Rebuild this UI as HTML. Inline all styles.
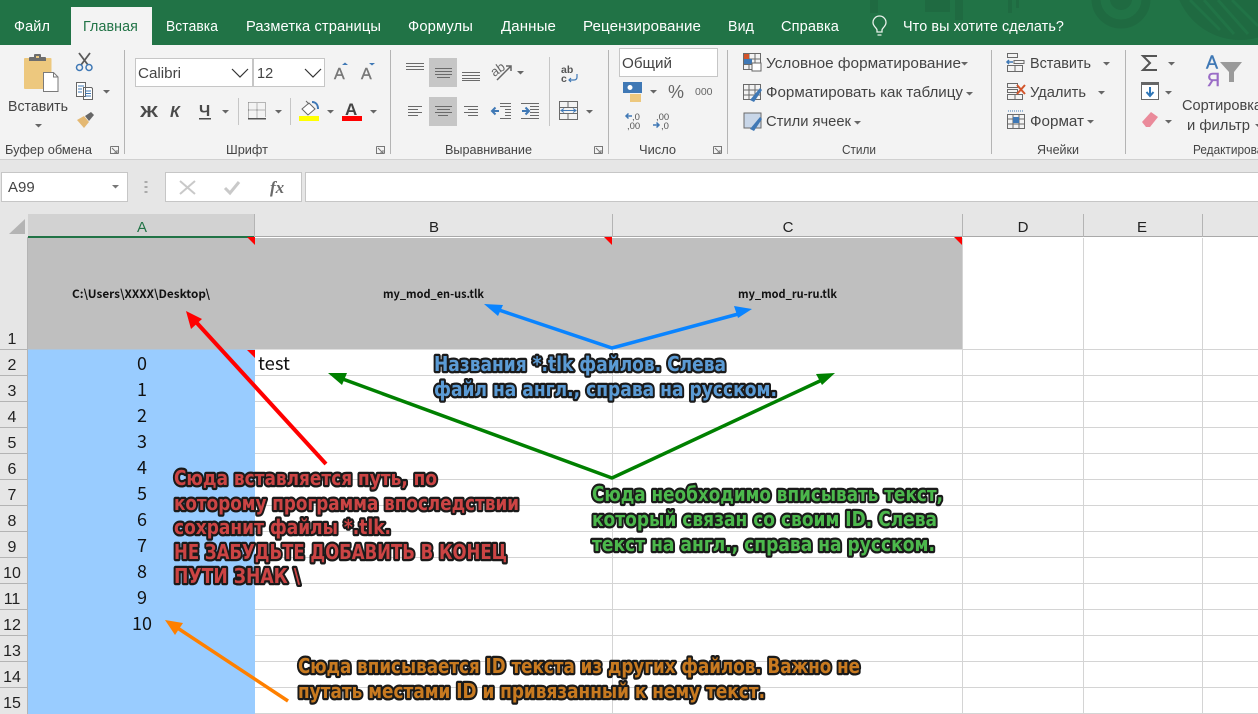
<!DOCTYPE html>
<html><head><meta charset="utf-8"><style>
html,body{margin:0;padding:0;width:1258px;height:714px;overflow:hidden;background:#fff}
svg{display:block;font-family:"Liberation Sans",sans-serif}
.t{fill:#fff;font-size:14.5px;letter-spacing:.1px}
.r{fill:#444;font-size:15px}
.g{fill:#444;font-size:12.5px}
.h{fill:#222;font-size:15px;text-anchor:middle}
.n{fill:#222;font-size:16px;text-anchor:middle}
.v{fill:#111;font-size:18px;text-anchor:middle;font-family:"Noto Sans CJK SC","Liberation Sans",sans-serif}
.b{fill:#111;font-size:11.5px;font-weight:bold;font-family:"Noto Sans CJK SC","Liberation Sans",sans-serif}
.a{font-family:"DejaVu Sans",sans-serif;font-weight:bold;font-size:20px;stroke:#1a1a1a;stroke-width:4.6px;stroke-linejoin:round;paint-order:stroke fill}
.ln{stroke:#6a6a6a;stroke-width:1;fill:none}
.ic{stroke:#6a6a6a;stroke-width:1;fill:none}
</style></head><body>
<svg width="1258" height="714" viewBox="0 0 1258 714" xmlns="http://www.w3.org/2000/svg">
<rect width="1258" height="714" fill="#fff"/>
<rect width="1258" height="45" fill="#217346"/>
<g fill="#1f6a41">
<circle cx="1121" cy="-1" r="25" fill="none" stroke="#1f6a41" stroke-width="9"/>
<circle cx="1121" cy="-1" r="11"/>
<circle cx="1240" cy="-26" r="66"/>
<rect x="870" width="8" height="13"/><rect x="925" width="25" height="12"/><rect x="955" width="8" height="20"/><rect x="1008" width="4" height="13"/><rect x="1016" width="3" height="8"/>
</g>
<g stroke="#217346" stroke-width="3"><path d="M1190 0l30 30M1204 0l30 34M1218 0l30 34M1232 0l26 26"/></g>
<rect y="45" width="1258" height="114" fill="#f3f3f3"/>
<rect x="71" y="7" width="81" height="39" fill="#f3f3f3"/>
<text class="t" x="14" y="31" textLength="36" lengthAdjust="spacingAndGlyphs">Файл</text>
<text class="t" x="83" y="31" textLength="55" lengthAdjust="spacingAndGlyphs" style="fill:#217346">Главная</text>
<text class="t" x="166" y="31" textLength="52" lengthAdjust="spacingAndGlyphs">Вставка</text>
<text class="t" x="246" y="31" textLength="135" lengthAdjust="spacingAndGlyphs">Разметка страницы</text>
<text class="t" x="408" y="31" textLength="65" lengthAdjust="spacingAndGlyphs">Формулы</text>
<text class="t" x="501" y="31" textLength="55" lengthAdjust="spacingAndGlyphs">Данные</text>
<text class="t" x="583" y="31" textLength="118" lengthAdjust="spacingAndGlyphs">Рецензирование</text>
<text class="t" x="728" y="31" textLength="26" lengthAdjust="spacingAndGlyphs">Вид</text>
<text class="t" x="781" y="31" textLength="58" lengthAdjust="spacingAndGlyphs">Справка</text>
<text class="t" x="903" y="31" textLength="161" lengthAdjust="spacingAndGlyphs">Что вы хотите сделать?</text>
<g fill="none" stroke="#e8f0ea" stroke-width="1.3"><path d="M877 32v-2c0-2-4-3.500-4-7.500a6.500 6.500 0 0 1 13 0c0 4-4 5.500-4 7.500v2zM877.500 35h4"/></g>
<g fill="#b4b4b4"><rect x="124" y="50" width="1" height="104"/><rect x="390" y="50" width="1" height="104"/><rect x="608" y="50" width="1" height="104"/><rect x="727" y="50" width="1" height="104"/><rect x="991" y="50" width="1" height="104"/><rect x="1125" y="50" width="1" height="104"/></g>
<rect y="159" width="1258" height="1.5" fill="#d0d0d0"/>
<rect x="24" y="58" width="27.500" height="31" rx="1" fill="#edc87e"/>
<path d="M29 61v-3q0-1 1-1h4v-2q0-1 1-1h5q1 0 1 1v2h4q1 0 1 1v3z" fill="#6d6d6d"/><rect x="36" y="56" width="3" height="2" fill="#edc87e"/>
<path d="M43.500 72.500h10l4.500 4.500v14.500h-14.500z" fill="#fff" stroke="#7a7a7a"/><path d="M53.500 72.500v4.500h4.500" fill="none" stroke="#7a7a7a"/>
<text class="r" x="8" y="111" textLength="60" lengthAdjust="spacingAndGlyphs">Вставить</text>
<g fill="#666"><path d="M35 124h7l-3.500 3.500zM103 90h7l-3.500 3.500zM222 110h7l-3.500 3.500zM275 110h7l-3.500 3.500zM327 110h7l-3.500 3.500zM370 110h7l-3.500 3.500zM517 71h7l-3.500 3.500zM586 110h7l-3.500 3.500zM650 90h7l-3.500 3.500zM961 62h7l-3.500 3.500zM966 92h7l-3.500 3.500zM854 121h7l-3.500 3.500zM1103 62h7l-3.500 3.500zM1098 91h7l-3.500 3.500zM1087 120h7l-3.500 3.500zM1168 62h7l-3.500 3.500zM1165 91h7l-3.500 3.500zM1165 120h7l-3.500 3.500zM1255 124h3v3z"/></g>
<path d="M79 53l9 12M90 53l-9 12" stroke="#5a5a5a" stroke-width="1.800" fill="none"/>
<circle cx="79.500" cy="67.500" r="3" fill="none" stroke="#3f78b5" stroke-width="1.500"/><circle cx="89" cy="67.500" r="3" fill="none" stroke="#3f78b5" stroke-width="1.500"/>
<path d="M76.500 82.500h9v14h-9zM83.500 87.500h8l1 1v11h-9z" fill="#fff" stroke="#666"/><path d="M78 86h6M78 89h4M78 92h4M85 91h6M85 93.500h6M85 96h6" stroke="#3f78b5"/>
<path d="M77 120l7-4 5 6-5 6z" fill="#e4b872"/><path d="M85 116l6-4 3 3-5 6z" fill="#666"/>
<text class="g" x="5" y="154" textLength="87" lengthAdjust="spacingAndGlyphs">Буфер обмена</text>
<text class="g" x="226" y="154" textLength="42" lengthAdjust="spacingAndGlyphs">Шрифт</text>
<text class="g" x="445" y="154" textLength="87" lengthAdjust="spacingAndGlyphs">Выравнивание</text>
<text class="g" x="639" y="154" textLength="37" lengthAdjust="spacingAndGlyphs">Число</text>
<text class="g" x="842" y="154" textLength="34" lengthAdjust="spacingAndGlyphs">Стили</text>
<text class="g" x="1037" y="154" textLength="42" lengthAdjust="spacingAndGlyphs">Ячейки</text>
<text class="g" x="1193" y="154" textLength="90" lengthAdjust="spacingAndGlyphs">Редактирование</text>
<g fill="none" stroke="#777"><path d="M110.500 146.500v7h8M110.500 146.500h8v7M112 148l5 5M117 150v3h-3"/><path d="M376.500 146.500v7h8M376.500 146.500h8v7M378 148l5 5M383 150v3h-3"/><path d="M594.500 146.500v7h8M594.500 146.500h8v7M596 148l5 5M601 150v3h-3"/><path d="M713.500 146.500v7h8M713.500 146.500h8v7M715 148l5 5M720 150v3h-3"/></g>
<rect x="135.500" y="58.500" width="117" height="28" fill="#fff" stroke="#c6c6c6"/>
<rect x="253.500" y="58.500" width="71" height="28" fill="#fff" stroke="#c6c6c6"/>
<text x="138" y="78" font-size="14.500" fill="#444" textLength="43" lengthAdjust="spacingAndGlyphs">Calibri</text>
<text x="257" y="78" font-size="14.500" fill="#444">12</text>
<path d="M232 69l8 8 8-8M305 69l8 8 8-8M697 59l8 8 8-8" fill="none" stroke="#333" stroke-width="1.200"/>
<text x="334" y="79" font-size="16" fill="#777" stroke="#777" stroke-width=".4">A</text><path d="M342 65h6l-3-2.500z" fill="#3f78b5"/>
<text x="361" y="79" font-size="16" fill="#777" stroke="#777" stroke-width=".4">A</text><path d="M369 63h6l-3 2.500z" fill="#3f78b5"/>
<text x="140" y="117" font-size="16" font-weight="bold" fill="#4a4a4a" textLength="18" lengthAdjust="spacingAndGlyphs">Ж</text>
<text x="170" y="117" font-size="16" font-weight="bold" font-style="italic" fill="#4a4a4a">К</text>
<text x="199" y="116" font-size="16" font-weight="bold" fill="#4a4a4a">Ч</text><rect x="199" y="118" width="12" height="1.500" fill="#4a4a4a"/>
<rect x="238" y="98" width="1" height="27" fill="#c6c6c6"/><rect x="290" y="98" width="1" height="27" fill="#c6c6c6"/>
<path d="M248.500 102.500h17v15M248.500 102.500v15M257 102.500v15M248.500 110h17" fill="none" stroke="#777" stroke-dasharray="1 1"/><rect x="248" y="118" width="18" height="1.500" fill="#555"/>
<path d="M302 109l7-6 6 6-7 6z" fill="#fff" stroke="#666"/><path d="M306 101l3 3" stroke="#666"/><path d="M312 102c4 0 6 3 6 7" fill="none" stroke="#3f78b5" stroke-width="2"/>
<rect x="299" y="116" width="20" height="5" fill="#ff0"/>
<text x="345" y="115" font-size="17" font-weight="bold" fill="#444">A</text>
<rect x="342" y="116" width="20" height="5" fill="#f00"/>
<rect x="429" y="58" width="28" height="29" fill="#c6c6c6"/><rect x="429" y="97" width="28" height="29" fill="#c6c6c6"/>
<path class="ln" d="M406 63.500h18M406 66.500h18M406 69.500h18M435 68.500h17M435 71.500h17M435 74.500h17M437 77.500h13M462 72.500h18M462 75.500h18M462 78.500h18M462 80.500h18"/>
<path class="ln" d="M408 106.500h14M408 109.500h10M408 112.500h14M408 115.500h10M435 106.500h17M437 109.500h13M435 112.500h17M438 115.500h10M464 106.500h14M468 109.500h10M464 112.500h14M468 115.500h10"/>
<path d="M497 80l14-14m-5 0h5v5" fill="none" stroke="#666" stroke-width="1.500"/><text x="492" y="74" font-size="13" fill="#666" transform="rotate(-35 498 72)">ab</text>
<path class="ln" d="M500 103.500h11M500 106.500h11M505 109.500h6M505 112.500h6M505 115.500h6M500 118.500h11M527 103.500h12M521 103.500h6M530 106.500h9M530 109.500h9M530 112.500h9M530 115.500h9M521 118.500h18"/>
<path d="M499 111h-6m2.500-3.500l-3.500 3.500 3.500 3.500M522 111h6m-2.500-3.500l3.500 3.500-3.500 3.500" fill="none" stroke="#3f78b5" stroke-width="2"/>
<rect x="549" y="57" width="1" height="69" fill="#c6c6c6"/>
<text x="561" y="73" font-size="10.500" font-weight="bold" fill="#555">ab</text><text x="561" y="82" font-size="10.500" font-weight="bold" fill="#555">c</text>
<path d="M577 74v3c0 2-1 3-3 3h-5m2-2l-2 2 2 2" fill="none" stroke="#3f78b5" stroke-width="1.200"/>
<path class="ic" d="M559.500 101.500h18v18h-18zM559.500 107.500h18M559.500 113.500h18M568 101.500v6M568 113.500v6"/>
<path d="M561 110.500h15m-12-2l-3 2 3 2m9-4l3 2-3 2" fill="none" stroke="#3f78b5"/>
<rect x="619.500" y="48.500" width="98" height="28" fill="#fff" stroke="#c6c6c6"/>
<text x="622" y="68" font-size="14.500" fill="#444" textLength="50" lengthAdjust="spacingAndGlyphs">Общий</text>
<rect x="623" y="82" width="19" height="11" fill="#3f78b5"/><circle cx="630" cy="87.500" r="2.500" fill="#fff"/>
<path d="M630 94h11v8h-11z" fill="#edc87e"/>
<text x="668" y="98" font-size="18" fill="#666">%</text>
<text x="695" y="95" font-size="10.500" fill="#666">000</text>
<text x="632" y="120" font-size="9.500" fill="#555">,0</text><text x="627" y="129" font-size="9.500" fill="#555">,00</text>
<path d="M632 116h-6m2.500-2.500l-2.500 2.500 2.500 2.500" fill="none" stroke="#3f78b5" stroke-width="1.500"/>
<text x="656" y="120" font-size="9.500" fill="#555">,00</text><text x="661" y="129" font-size="9.500" fill="#555">,0</text>
<path d="M653 125h6m-2.500-2.500l2.500 2.500-2.500 2.500" fill="none" stroke="#3f78b5" stroke-width="1.500"/>
<path class="ic" d="M743.500 53.500h17v16h-17zM743.500 59h17M743.500 64.500h17M749 53.500v16M755 53.500v16"/><rect x="744" y="54" width="5" height="5" fill="#d2542a"/><rect x="744" y="59" width="8" height="5" fill="#3f78b5"/><path d="M752 63h9v8h-9z" fill="#fff" stroke="#666"/>
<path class="ic" d="M743.500 84.500h17v15h-17zM743.500 90h17M743.500 95h17M749 84.500v15M755 84.500v15"/><path d="M750 100l10-12 2 2-8 12z" fill="#3f78b5"/>
<rect x="744" y="113" width="17" height="15" fill="#c8d6e8" stroke="#6a6a6a"/><path d="M750 129l10-12 2 2-8 12z" fill="#3f78b5"/>
<text class="r" x="766" y="68" textLength="195" lengthAdjust="spacingAndGlyphs">Условное форматирование</text>
<text class="r" x="766" y="97" textLength="197" lengthAdjust="spacingAndGlyphs">Форматировать как таблицу</text>
<text class="r" x="766" y="126" textLength="85" lengthAdjust="spacingAndGlyphs">Стили ячеек</text>
<path class="ic" d="M1007.500 53.500h10v4h-10zM1007.500 65.500h15v6h-15zM1015 65.500v6M1014 60.500h10v3h-10z"/><path d="M1013 62h-6m2-2l-2 2 2 2" fill="none" stroke="#3f78b5" stroke-width="1.500"/>
<path class="ic" d="M1007.500 83.500h10v4h-10zM1007.500 94.500h15v5h-15zM1015 94.500v5M1007.500 89.500h10v3h-10z"/><path d="M1017 85l8 9m0-9l-8 9" stroke="#d2542a" stroke-width="2" fill="none"/>
<path class="ic" d="M1007.500 114.500h17v14h-17zM1013 114.500v14M1019 114.500v14M1007.500 119h17M1007.500 124h17"/><rect x="1013" y="117" width="6" height="6" fill="#3f78b5"/><path d="M1008 111h16" stroke="#3f78b5" stroke-dasharray="1 1"/>
<text class="r" x="1030" y="68" textLength="61" lengthAdjust="spacingAndGlyphs">Вставить</text>
<text class="r" x="1030" y="97" textLength="56" lengthAdjust="spacingAndGlyphs">Удалить</text>
<text class="r" x="1030" y="126" textLength="54" lengthAdjust="spacingAndGlyphs">Формат</text>
<path d="M1157 56h-14l7 7-7 7h14" fill="none" stroke="#555" stroke-width="2"/>
<rect x="1141.500" y="82.500" width="17" height="17" fill="#fff" stroke="#666"/><rect x="1142" y="82" width="17" height="3" fill="#666"/><path d="M1150 87v9m-3.500-4l3.500 4 3.500-4" fill="none" stroke="#2e75b6" stroke-width="2"/>
<path d="M1142 122l9-10 7 5-8 10h-4z" fill="#ea8a9a"/>
<text x="1206" y="68.500" font-size="18" fill="#3f78b5" stroke="#3f78b5" stroke-width=".4">A</text>
<text x="1207" y="86" font-size="18" fill="#9a6cc6" stroke="#9a6cc6" stroke-width=".4">Я</text>
<path d="M1220 62h22l-8 10v10h-5V72z" fill="#9a9a9a"/>
<text class="r" x="1182" y="110" textLength="80" lengthAdjust="spacingAndGlyphs">Сортировка</text>
<text class="r" x="1187" y="130" textLength="63" lengthAdjust="spacingAndGlyphs">и фильтр</text>

<rect y="160" width="1258" height="54" fill="#e6e6e6"/>
<rect x="1.500" y="172.500" width="126" height="29" fill="#fff" stroke="#c6c6c6"/>
<text x="8" y="192" font-size="15" fill="#444">A99</text>
<path d="M112 185h7l-3.500 3.500z" fill="#777"/>
<path d="M146 181v2M146 186v2M146 191v2" stroke="#aaa" stroke-width="3"/>
<rect x="165.500" y="172.500" width="136" height="29" fill="#fff" stroke="#c6c6c6"/>
<path d="M180 181l15 13m0-13l-15 13" stroke="#c9c9c9" stroke-width="2"/>
<path d="M225 188l5 5 9-11" stroke="#c9c9c9" stroke-width="3" fill="none"/>
<text x="270" y="193" font-size="17" font-family="Liberation Serif,serif" font-style="italic" font-weight="bold" fill="#6a6a6a">fx</text>
<rect x="305.500" y="172.500" width="953" height="29" fill="#fff" stroke="#c6c6c6"/>

<rect y="214" width="1258" height="23" fill="#e6e6e6"/>
<rect y="237" width="28" height="477" fill="#e6e6e6"/>
<path d="M9 234l16-15v15z" fill="#b4b4b4"/>
<rect x="28" y="214" width="227" height="23" fill="#d2d2d2"/>
<rect x="28" y="236" width="227" height="2" fill="#217346"/>
<rect x="255" y="236" width="1003" height="1" fill="#a9a9a9"/>
<g fill="#b4b4b4"><rect x="254" y="214" width="1" height="23"/><rect x="612" y="214" width="1" height="23"/><rect x="962" y="214" width="1" height="23"/><rect x="1083" y="214" width="1" height="23"/><rect x="1202" y="214" width="1" height="23"/><rect x="27" y="237" width="1" height="477"/></g>
<text class="h" x="142" y="232" style="fill:#217346">A</text>
<text class="h" x="434" y="232">B</text><text class="h" x="788" y="232">C</text><text class="h" x="1023" y="232">D</text><text class="h" x="1142" y="232">E</text>

<g fill="#d4d4d4">
<rect x="255" y="375" width="1003" height="1"/><rect x="255" y="401" width="1003" height="1"/><rect x="255" y="427" width="1003" height="1"/><rect x="255" y="453" width="1003" height="1"/><rect x="255" y="479" width="1003" height="1"/><rect x="255" y="505" width="1003" height="1"/><rect x="255" y="531" width="1003" height="1"/><rect x="255" y="557" width="1003" height="1"/><rect x="255" y="583" width="1003" height="1"/><rect x="255" y="609" width="1003" height="1"/><rect x="255" y="635" width="1003" height="1"/><rect x="255" y="661" width="1003" height="1"/><rect x="255" y="687" width="1003" height="1"/><rect x="255" y="713" width="1003" height="1"/>
<rect x="962" y="238" width="1" height="476"/><rect x="1083" y="238" width="1" height="476"/><rect x="1202" y="238" width="1" height="476"/><rect x="612" y="350" width="1" height="364"/>
<rect x="963" y="349" width="295" height="1"/>
</g>
<g fill="#b4b4b4">
<rect y="349" width="28" height="1"/><rect y="375" width="28" height="1"/><rect y="401" width="28" height="1"/><rect y="427" width="28" height="1"/><rect y="453" width="28" height="1"/><rect y="479" width="28" height="1"/><rect y="505" width="28" height="1"/><rect y="531" width="28" height="1"/><rect y="557" width="28" height="1"/><rect y="583" width="28" height="1"/><rect y="609" width="28" height="1"/><rect y="635" width="28" height="1"/><rect y="661" width="28" height="1"/><rect y="687" width="28" height="1"/>
</g>
<rect x="28" y="238" width="934" height="111.500" fill="#bfbfbf"/>
<rect x="28" y="349.500" width="227" height="365" fill="#99ccff"/>
<g fill="#f00"><path d="M247 237h8v8zM604 237h8v8zM954 237h8v8zM247 350h8v8z"/></g>
<text class="n" x="12" y="344">1</text>
<text class="n" x="12" y="370">2</text><text class="n" x="12" y="396">3</text><text class="n" x="12" y="422">4</text><text class="n" x="12" y="448">5</text><text class="n" x="12" y="474">6</text><text class="n" x="12" y="500">7</text><text class="n" x="12" y="526">8</text><text class="n" x="12" y="552">9</text><text class="n" x="12" y="578">10</text><text class="n" x="12" y="604">11</text><text class="n" x="12" y="630">12</text><text class="n" x="12" y="656">13</text><text class="n" x="12" y="682">14</text><text class="n" x="12" y="708">15</text>
<text class="b" x="72" y="298" textLength="138" lengthAdjust="spacingAndGlyphs">C:\Users\XXXX\Desktop\</text>
<text class="b" x="383" y="298" textLength="101" lengthAdjust="spacingAndGlyphs">my_mod_en-us.tlk</text>
<text class="b" x="738" y="298" textLength="99" lengthAdjust="spacingAndGlyphs">my_mod_ru-ru.tlk</text>
<text class="v" x="142" y="370">0</text><text class="v" x="142" y="396">1</text><text class="v" x="142" y="422">2</text><text class="v" x="142" y="448">3</text><text class="v" x="142" y="474">4</text><text class="v" x="142" y="500">5</text><text class="v" x="142" y="526">6</text><text class="v" x="142" y="552">7</text><text class="v" x="142" y="578">8</text><text class="v" x="142" y="604">9</text><text class="v" x="142" y="630">10</text>
<text x="258" y="370" font-size="18" fill="#111" font-family="Noto Sans CJK SC,Liberation Sans,sans-serif" textLength="32" lengthAdjust="spacingAndGlyphs">test</text>

<g fill="none">
<path d="M326 464L196 322" stroke="#f00" stroke-width="4"/>
<path d="M490 307L612 348 742 313" stroke="#0a84ff" stroke-width="3.500"/>
<path d="M340 378L612 478 822 380" stroke="#008000" stroke-width="3.500"/>
<path d="M288 701L176 627" stroke="#ff8000" stroke-width="3.500"/>
</g>
<path d="M186 311l16 8-11 10z" fill="#f00"/>
<path d="M484 304l19 1-5 11z" fill="#0a84ff"/><path d="M752 309l-18-3 4 12z" fill="#0a84ff"/>
<path d="M328 373l19 0-5 12z" fill="#008000"/><path d="M835 373l-19 1 6 11z" fill="#008000"/>
<path d="M165 620l18 3-8 12z" fill="#ff8000"/>

<g class="a" fill="#5b9bd5">
<text x="434" y="371" textLength="292" lengthAdjust="spacingAndGlyphs">Названия *.tlk файлов. Слева</text>
<text x="434" y="396" textLength="343" lengthAdjust="spacingAndGlyphs">файл на англ., справа на русском.</text>
</g>
<g class="a" fill="#cc4444">
<text x="174" y="485" textLength="263" lengthAdjust="spacingAndGlyphs">Сюда вставляется путь, по</text>
<text x="174" y="510" textLength="345" lengthAdjust="spacingAndGlyphs">которому программа впоследствии</text>
<text x="174" y="534" textLength="217" lengthAdjust="spacingAndGlyphs">сохранит файлы *.tlk.</text>
<text x="174" y="559" textLength="333" lengthAdjust="spacingAndGlyphs">НЕ ЗАБУДЬТЕ ДОБАВИТЬ В КОНЕЦ</text>
<text x="174" y="583" textLength="126" lengthAdjust="spacingAndGlyphs">ПУТИ ЗНАК \</text>
</g>
<g class="a" fill="#4cb84c">
<text x="592" y="501" textLength="351" lengthAdjust="spacingAndGlyphs">Сюда необходимо вписывать текст,</text>
<text x="592" y="526" textLength="345" lengthAdjust="spacingAndGlyphs">который связан со своим ID. Слева</text>
<text x="592" y="551" textLength="343" lengthAdjust="spacingAndGlyphs">текст на англ., справа на русском.</text>
</g>
<g class="a" fill="#c87a20">
<text x="298" y="673" textLength="562" lengthAdjust="spacingAndGlyphs">Сюда вписывается ID текста из других файлов. Важно не</text>
<text x="298" y="698" textLength="467" lengthAdjust="spacingAndGlyphs">путать местами ID и привязанный к нему текст.</text>
</g>
</svg>
</body></html>
